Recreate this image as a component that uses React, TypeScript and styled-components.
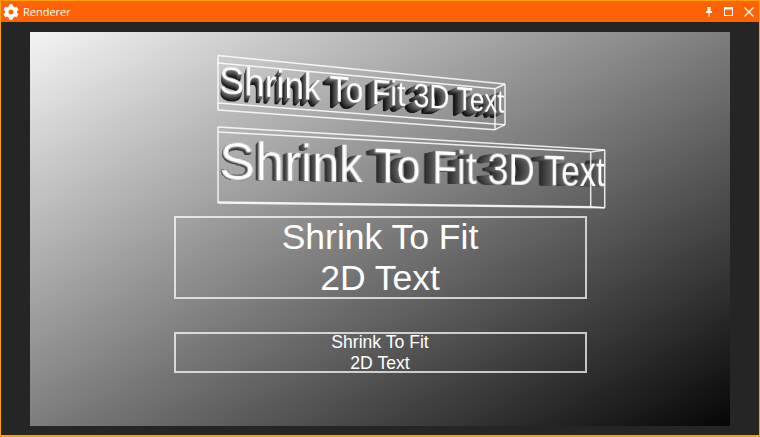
import React from 'react'
import styled, { createGlobalStyle } from 'styled-components'
import { FaCog } from 'react-icons/fa'

type Pt = [number, number]
type Quad = [Pt, Pt, Pt, Pt] // top left, top right, bottom right, bottom left

const GlobalStyle = createGlobalStyle`
  html, body {
    margin: 0;
    padding: 0;
    width: 760px;
    height: 437px;
    overflow: hidden;
    background: #252525;
  }
`

const Win = styled.div`
  box-sizing: border-box;
  width: 760px;
  height: 437px;
  display: flex;
  flex-direction: column;
  border: 1px solid #ffa200;
  border-bottom-width: 2px;
  background: #252525;
  font-family: 'Liberation Sans', Arial, sans-serif;
`

const TitleBar = styled.div`
  flex: none;
  height: 21px;
  display: flex;
  align-items: center;
  background: #ff6105;
  color: #fff;
`

const AppIcon = styled.span`
  display: flex;
  margin-left: 2px;
  font-size: 16px;
`

const Title = styled.span`
  margin-left: 4px;
  font-family: 'Open Sans', 'Noto Sans', sans-serif;
  font-size: 11px;
`

const Controls = styled.div`
  margin-left: auto;
  display: flex;
  align-items: center;
  gap: 11px;
  padding-right: 5px;
`

const Client = styled.div`
  flex: 1;
  padding: 10px 29px 9px;
  display: flex;
`

const Canvas = styled.div`
  position: relative;
  flex: 1;
  overflow: hidden;
  display: flex;
  flex-direction: column;
  align-items: center;
  gap: 33px;
  padding-top: 184px;
  background: linear-gradient(to bottom right, #f4f4f4, #060606);
`

const FitBox = styled.div<{ $size: number; $line: number; $height: number }>`
  box-sizing: border-box;
  width: 413px;
  height: ${(p) => p.$height}px;
  display: flex;
  flex-direction: column;
  align-items: center;
  justify-content: center;
  border: 2px solid rgba(255, 255, 255, 0.72);
  color: #fff;
  font-size: ${(p) => p.$size}px;
  line-height: ${(p) => p.$line}px;
`

const Wire = styled.svg`
  position: absolute;
  left: 0;
  top: 0;
  width: 700px;
  height: 394px;
  fill: none;
  stroke: rgba(255, 255, 255, 0.85);
  stroke-width: 1.5;
`

const Face = styled.div`
  position: absolute;
  left: 0;
  top: 0;
  width: 369px;
  height: 28.64px;
  line-height: 28.64px;
  font-size: 40px;
  white-space: nowrap;
  transform-origin: 0 0;
`

const LABEL = 'Shrink To Fit 3D Text'
const FACE_W = 369
const FACE_H = 28.64
const LAYERS = 16

const toCanvas = (q: Quad): Quad => q.map(([x, y]) => [x - 30, y - 32]) as Quad

// rectangle of the text face -> quad on the canvas
const quadMatrix = (quad: Quad) => {
  const [[x0, y0], [x1, y1], [x2, y2], [x3, y3]] = toCanvas(quad)
  const dx1 = x1 - x2
  const dx2 = x3 - x2
  const dx3 = x0 - x1 + x2 - x3
  const dy1 = y1 - y2
  const dy2 = y3 - y2
  const dy3 = y0 - y1 + y2 - y3
  const den = dx1 * dy2 - dx2 * dy1
  const g = (dx3 * dy2 - dx2 * dy3) / den
  const h = (dx1 * dy3 - dx3 * dy1) / den
  const a = x1 - x0 + g * x1
  const b = x3 - x0 + h * x3
  const d = y1 - y0 + g * y1
  const e = y3 - y0 + h * y3
  return `matrix3d(${[
    a / FACE_W, d / FACE_W, 0, g / FACE_W,
    b / FACE_H, e / FACE_H, 0, h / FACE_H,
    0, 0, 1, 0,
    x0, y0, 0, 1,
  ].join(',')})`
}

const mix = (a: Quad, b: Quad, t: number): Quad =>
  a.map((p, i) => [p[0] + (b[i][0] - p[0]) * t, p[1] + (b[i][1] - p[1]) * t]) as Quad

interface BlockProps {
  back: Quad
  front: Quad
  dark: number
  light: number
}

const ExtrudedText: React.FC<BlockProps> = ({ back, front, dark, light }) => {
  const steps = Array.from({ length: LAYERS }, (_, i) => i / LAYERS)
  return (
    <>
      {steps.map((t) => {
        const v = Math.round(dark + (light - dark) * t)
        return (
          <Face
            key={t}
            aria-hidden="true"
            style={{ transform: quadMatrix(mix(back, front, t)), color: `rgb(${v},${v},${v})` }}
          >
            {LABEL}
          </Face>
        )
      })}
      <Face style={{ transform: quadMatrix(front), color: '#fff' }}>{LABEL}</Face>
    </>
  )
}

const wireLines: [number, number, number, number][] = [
  // upper block
  [218, 55.5, 505, 84],
  [218, 63, 495, 88.7],
  [218, 103, 505, 124.7],
  [218, 110, 495, 129.7],
  [218, 55.5, 218, 110],
  [505, 84, 505, 124.7],
  [495, 88.7, 495, 129.7],
  [505, 84, 495, 88.7],
  [505, 124.7, 495, 129.7],
  // lower block
  [218, 127, 604.7, 150],
  [218, 132, 590.7, 152],
  [218, 202, 590.7, 206.7],
  [218, 203, 604.7, 207.7],
  [218, 127, 218, 203],
  [604.7, 150, 604.7, 207.7],
  [590.7, 152, 590.7, 206.7],
  [604.7, 150, 590.7, 152],
  [604.7, 207.7, 590.7, 206.7],
]

const upperFront: Quad = [[219, 66], [505, 91], [505, 113.5], [219, 94]]
const upperBack: Quad = [[219, 73.8], [495, 95.5], [495, 118.8], [219, 101.3]]
const lowerFront: Quad = [[219, 142], [606, 158], [606, 187], [219, 180.5]]
const lowerBack: Quad = [[219, 145.5], [592, 160], [592, 187], [219, 180]]

const PinIcon = () => (
  <svg width="8" height="10" viewBox="0 0 8 10" fill="#fff">
    <path d="M2 0h4v1H5.5v3H7v2H4.5v4h-1V6H1V4h1.5V1H2z" />
  </svg>
)

const MaxIcon = () => (
  <svg width="9" height="9" viewBox="0 0 9 9" fill="none" stroke="#fff">
    <rect x="0.5" y="0.5" width="8" height="8" />
    <path d="M0 1.5h9" strokeWidth="2" />
  </svg>
)

const CloseIcon = () => (
  <svg width="10" height="10" viewBox="0 0 10 10" fill="none" stroke="#fff" strokeWidth="1.3">
    <path d="M0.5 0.5l9 9M9.5 0.5l-9 9" />
  </svg>
)

const App: React.FC = () => {
  return (
    <Win>
      <GlobalStyle />
      <TitleBar>
        <AppIcon>
          <FaCog />
        </AppIcon>
        <Title>Renderer</Title>
        <Controls>
          <PinIcon />
          <MaxIcon />
          <CloseIcon />
        </Controls>
      </TitleBar>
      <Client>
        <Canvas>
          <FitBox $size={35.5} $line={41} $height={83}>
            <span>Shrink To Fit</span>
            <span>2D Text</span>
          </FitBox>
          <FitBox $size={17.6} $line={20.5} $height={41}>
            <span>Shrink To Fit</span>
            <span>2D Text</span>
          </FitBox>
          <ExtrudedText back={upperBack} front={upperFront} dark={10} light={120} />
          <ExtrudedText back={lowerBack} front={lowerFront} dark={40} light={100} />
          <Wire viewBox="30 32 700 394">
            {wireLines.map(([x1, y1, x2, y2]) => (
              <line key={`${x1}-${y1}-${x2}-${y2}`} x1={x1} y1={y1} x2={x2} y2={y2} />
            ))}
          </Wire>
        </Canvas>
      </Client>
    </Win>
  )
}

export default App
